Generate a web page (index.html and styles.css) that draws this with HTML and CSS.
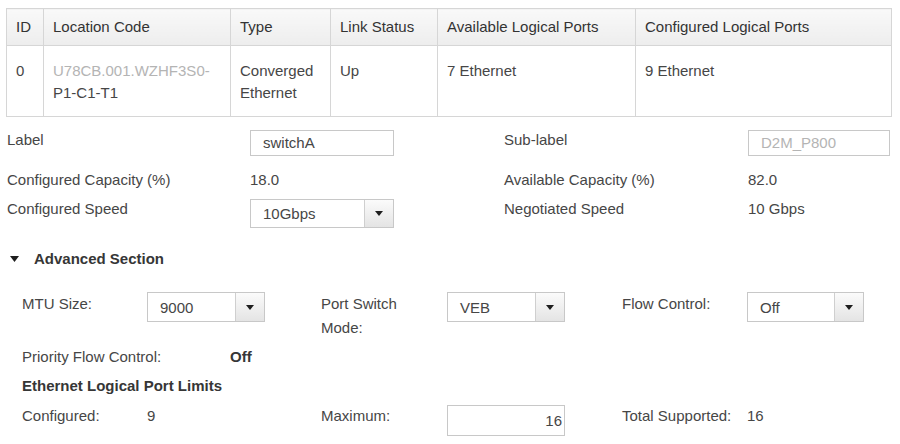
FILE: index.html
```html
<!DOCTYPE html>
<html>
<head>
<meta charset="utf-8">
<link rel="stylesheet" href="styles.css">
</head>
<body>
<div class="page">
  <table class="ports">
    <colgroup>
      <col class="c-id"><col class="c-loc"><col class="c-type"><col class="c-link"><col class="c-avail"><col class="c-conf">
    </colgroup>
    <thead>
      <tr><th>ID</th><th>Location Code</th><th>Type</th><th>Link Status</th><th>Available Logical Ports</th><th>Configured Logical Ports</th></tr>
    </thead>
    <tbody>
      <tr>
        <td>0</td>
        <td><span class="redacted">U78CB.001.WZHF3S0-</span><br>P1-C1-T1</td>
        <td>Converged<br>Ethernet</td>
        <td>Up</td>
        <td>7 Ethernet</td>
        <td>9 Ethernet</td>
      </tr>
    </tbody>
  </table>

  <div class="props">
    <div class="lbl">Label</div>
    <div><div class="box w144">switchA</div></div>
    <div class="lbl">Sub-label</div>
    <div><div class="box w142"><span class="redacted">D2M_P800</span></div></div>

    <div class="lbl">Configured Capacity (%)</div>
    <div class="val">18.0</div>
    <div class="lbl">Available Capacity (%)</div>
    <div class="val">82.0</div>

    <div class="lbl">Configured Speed</div>
    <div><div class="select w144 h29"><span class="sv">10Gbps</span><span class="btn"><svg width="8" height="5" viewBox="0 0 8 5"><path d="M0 0H8L4 5Z"/></svg></span></div></div>
    <div class="lbl">Negotiated Speed</div>
    <div class="val">10 Gbps</div>
  </div>

  <div class="adv-head"><svg class="tri" width="9" height="6" viewBox="0 0 9 6"><path d="M0 0H9L4.5 6Z"/></svg>Advanced Section</div>

  <div class="adv-grid">
    <div class="alb">MTU Size:</div>
    <div><div class="select w118 h30"><span class="sv">9000</span><span class="btn"><svg width="8" height="5" viewBox="0 0 8 5"><path d="M0 0H8L4 5Z"/></svg></span></div></div>
    <div class="alb">Port Switch<br>Mode:</div>
    <div><div class="select w118 h30"><span class="sv">VEB</span><span class="btn"><svg width="8" height="5" viewBox="0 0 8 5"><path d="M0 0H8L4 5Z"/></svg></span></div></div>
    <div class="alb">Flow Control:</div>
    <div><div class="select w117 h30"><span class="sv">Off</span><span class="btn"><svg width="8" height="5" viewBox="0 0 8 5"><path d="M0 0H8L4 5Z"/></svg></span></div></div>
  </div>

  <div class="pfc"><span class="pfc-l">Priority Flow Control:</span><span class="strong">Off</span></div>
  <div class="subhead">Ethernet Logical Port Limits</div>

  <div class="adv-grid limits">
    <div class="alb">Configured:</div>
    <div class="alb">9</div>
    <div class="alb">Maximum:</div>
    <div><div class="box num w118 h31">16</div></div>
    <div class="alb">Total Supported:</div>
    <div class="alb">16</div>
  </div>
</div>
</body>
</html>
```

FILE: styles.css
```css
html, body {
  margin: 0;
  background: #ffffff;
}
body {
  font-family: "Liberation Sans", Arial, sans-serif;
  font-size: 15px;
  color: #464646;
}
.page {
  padding: 8px 0 0 6px;
}

/* table */
.ports {
  border-collapse: collapse;
  table-layout: fixed;
  width: 885px;
}
.c-id { width: 37px; }
.c-loc { width: 187px; }
.c-type { width: 100px; }
.c-link { width: 107px; }
.c-avail { width: 198px; }
.c-conf { width: 256px; }
.ports th,
.ports td {
  border: 1px solid #d6d6d6;
  text-align: left;
  white-space: nowrap;
  overflow: hidden;
}
.ports th {
  height: 36px;
  padding: 0 9px;
  font-weight: normal;
  color: #333333;
  line-height: 20px;
  vertical-align: middle;
  background: linear-gradient(#f9f9f9, #ededed);
}
.ports td {
  height: 44px;
  padding: 14px 9px 12px;
  line-height: 22px;
  vertical-align: top;
}
.redacted {
  color: #b4b4b4;
}

/* properties */
.props {
  display: grid;
  grid-template-columns: 243px 254px 244px 142px;
  grid-template-rows: 40px 29px 29px;
  align-items: start;
  margin: 13px 0 0 1px;
}
.lbl, .val {
  line-height: 20px;
}
.box {
  box-sizing: border-box;
  height: 26px;
  border: 1px solid #c8c8c8;
  padding: 0 12px;
  line-height: 24px;
  background: #fff;
}
.w144 { width: 144px; }
.w142 { width: 142px; }
.w118 { width: 118px; }
.w117 { width: 117px; }
.h29 { height: 29px; }
.h30 { height: 30px; }
.h31 { height: 31px; line-height: 29px; }
.box.num {
  text-align: right;
  padding: 0 2px 0 0;
}
.select {
  box-sizing: border-box;
  display: flex;
  border: 1px solid #c8c8c8;
  background: #fff;
}
.sv {
  flex: 1;
  padding-left: 12px;
  display: flex;
  align-items: center;
}
.btn {
  width: 28px;
  border-left: 1px solid #cfcfcf;
  background: linear-gradient(#fbfbfb, #e4e4e4);
  display: flex;
  align-items: center;
  justify-content: center;
}
.btn svg path { fill: #1e1e1e; }

/* advanced */
.adv-head {
  margin-top: 21px;
  padding-left: 4px;
  line-height: 20px;
  font-weight: bold;
  color: #363636;
  display: flex;
  align-items: center;
}
.tri {
  margin-right: 15px;
}
.tri path { fill: #1e1e1e; }
.adv-grid {
  display: grid;
  grid-template-columns: 125px 174px 126px 175px 125px 118px;
  align-items: start;
  margin: 23px 0 0 16px;
}
.alb {
  line-height: 24px;
}
.pfc {
  display: flex;
  margin: 7px 0 0 16px;
  line-height: 20px;
}
.pfc-l {
  width: 208px;
}
.strong {
  font-weight: bold;
  color: #363636;
}
.subhead {
  margin: 9px 0 0 16px;
  line-height: 20px;
  font-weight: bold;
  color: #363636;
}
.limits {
  margin-top: 9px;
}
.limits .alb {
  line-height: 22px;
}
```
